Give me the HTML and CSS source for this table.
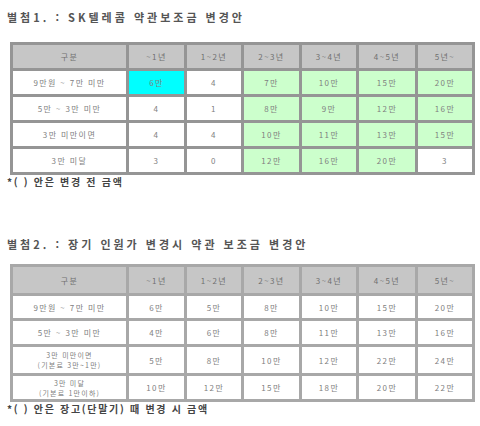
FILE: index.html
```html
<!DOCTYPE html>
<html lang="ko">
<head>
<meta charset="utf-8">
<link rel="stylesheet" href="styles.css">
</head>
<body>
<div class="page">
  <p class="title t1">별첨1. : SK텔레콤 약관보조금 변경안</p>
  <table class="grid g1">
    <colgroup>
      <col class="c0"><col class="c1"><col class="c2"><col class="c3"><col class="c4"><col class="c5"><col class="c6">
    </colgroup>
    <tr class="head"><td>구분</td><td>~1년</td><td>1~2년</td><td>2~3년</td><td>3~4년</td><td>4~5년</td><td>5년~</td></tr>
    <tr><td>9만원 ~ 7만 미만</td><td class="cy">6만</td><td>4</td><td class="gr">7만</td><td class="gr">10만</td><td class="gr">15만</td><td class="gr">20만</td></tr>
    <tr><td>5만 ~ 3만 미만</td><td>4</td><td>1</td><td class="gr">8만</td><td class="gr">9만</td><td class="gr">12만</td><td class="gr">16만</td></tr>
    <tr><td>3만 미만이면</td><td>4</td><td>4</td><td class="gr">10만</td><td class="gr">11만</td><td class="gr">13만</td><td class="gr">15만</td></tr>
    <tr><td>3만 미달</td><td>3</td><td>0</td><td class="gr">12만</td><td class="gr">16만</td><td class="gr">20만</td><td>3</td></tr>
  </table>
  <p class="note n1">*( ) 안은 변경 전 금액</p>

  <p class="title t2">별첨2. : 장기 인원가 변경시 약관 보조금 변경안</p>
  <table class="grid g2">
    <colgroup>
      <col class="c0"><col class="c1"><col class="c2"><col class="c3"><col class="c4"><col class="c5"><col class="c6">
    </colgroup>
    <tr class="head"><td>구분</td><td>~1년</td><td>1~2년</td><td>2~3년</td><td>3~4년</td><td>4~5년</td><td>5년~</td></tr>
    <tr class="r25"><td>9만원 ~ 7만 미만</td><td>6만</td><td>5만</td><td>8만</td><td>10만</td><td>15만</td><td>20만</td></tr>
    <tr><td>5만 ~ 3만 미만</td><td>4만</td><td>6만</td><td>8만</td><td>11만</td><td>13만</td><td>16만</td></tr>
    <tr class="tall"><td class="two">3만 미만이면<br>(기본료 3만~1만)</td><td>5만</td><td>8만</td><td>10만</td><td>12만</td><td>22만</td><td>24만</td></tr>
    <tr><td class="two">3만 미달<br>(기본료 1만이하)</td><td>10만</td><td>12만</td><td>15만</td><td>18만</td><td>20만</td><td>22만</td></tr>
  </table>
  <p class="note n2">*( ) 안은 장고(단말기) 때 변경 시 금액</p>
</div>
</body>
</html>
```
FILE: styles.css
```css
html, body {
  margin: 0;
  padding: 0;
  background: #ffffff;
}
.page {
  width: 480px;
  height: 426px;
  padding: 0 0 0 7px;
  box-sizing: border-box;
  font-family: "Noto Sans CJK KR", "Noto Sans", sans-serif;
  color: #666;
}
.title {
  margin: 0;
  font-size: 11px;
  line-height: 12px;
  font-weight: 700;
  color: #555;
  letter-spacing: 3px;
  white-space: nowrap;
}
.t1 { padding-top: 11px; height: 42px; box-sizing: border-box; }
.t2 { padding-top: 50px; height: 76px; box-sizing: border-box; }
.grid {
  margin-left: 3px;
  width: 462px;
  border-collapse: collapse;
  table-layout: fixed;
  font-size: 8px;
  line-height: 9px;
  letter-spacing: 1.4px;
}
.grid td {
  border: 3px solid #a8a8a8;
  text-align: center;
  vertical-align: middle;
  padding: 0;
  color: #808080;
  background: #fff;
  white-space: nowrap;
}
.grid td.two {
  font-size: 7px;
  line-height: 10px;
  letter-spacing: 1.2px;
}
.g1 td { border-color: #959595; }
.c0 { width: 116px; }
.c1 { width: 58px; }
.c2 { width: 57px; }
.c3 { width: 58px; }
.c4 { width: 57px; }
.c5 { width: 59px; }
.c6 { width: 57px; }
.g1 tr { height: 26px; }
.g2 .head { height: 29px; }
.g2 tr { height: 26px; }
.g2 tr.r25 { height: 25px; }
.g2 tr.tall { height: 29px; }
.grid .head td {
  background: #c6c6c6;
  color: #707070;
}
.grid td.gr { background: #ccffcc; }
.grid td.cy { background: #00ffff; }
.note {
  margin: 0;
  font-size: 10px;
  line-height: 13px;
  color: #444;
  font-weight: 700;
  letter-spacing: 1.7px;
  white-space: nowrap;
}
```
